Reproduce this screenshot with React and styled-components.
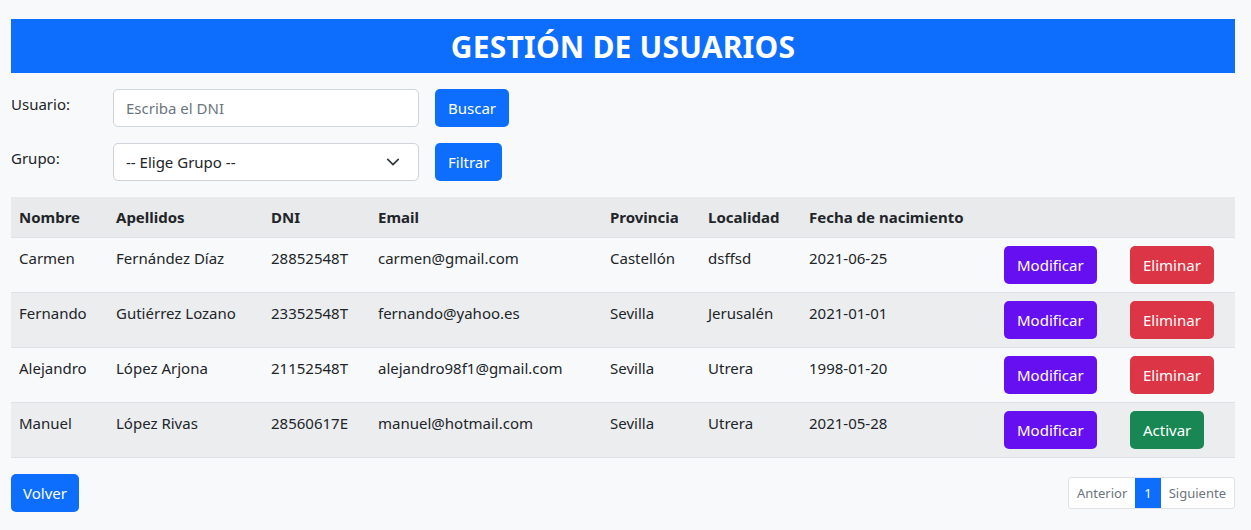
import React from "react";
import styled, { createGlobalStyle } from "styled-components";

const GlobalStyle = createGlobalStyle`
  body {
    margin: 0;
    background: #f8f9fa;
    font-family: "Noto Sans", "Open Sans", sans-serif;
    color: #212529;
    font-size: 16px;
  }
`;

const Page = styled.div`
  padding: 19px 16px 0 11px;
`;

const Header = styled.h1`
  margin: 0;
  height: 54px;
  background: #0d6efd;
  color: #fff;
  font-size: 30px;
  font-weight: 700;
  display: flex;
  align-items: center;
  justify-content: center;
  letter-spacing: 0.2px;
`;

const FormRow = styled.div`
  display: flex;
  align-items: flex-start;
  margin-top: ${(p) => p.$top}px;
`;

const Label = styled.label`
  width: 102px;
  font-size: 15px;
  padding-top: 5px;
  line-height: 20px;
`;

const Input = styled.input`
  box-sizing: border-box;
  width: 306px;
  height: 38px;
  border: 1px solid #ced4da;
  border-radius: 5px;
  background: #fff;
  padding: 0 12px;
  font: inherit;
  font-size: 15px;
  &::placeholder {
    color: #6c757d;
  }
`;

const SelectBox = styled.div`
  box-sizing: border-box;
  width: 306px;
  height: 38px;
  border: 1px solid #ced4da;
  border-radius: 5px;
  background: #fff;
  padding: 0 18px 0 12px;
  display: flex;
  align-items: center;
  justify-content: space-between;
  font-size: 15px;
`;

const Button = styled.button`
  box-sizing: border-box;
  height: 38px;
  border: none;
  border-radius: 5px;
  background: ${(p) => p.$bg || "#0d6efd"};
  color: #fff;
  font: inherit;
  font-size: 15px;
  padding: 0 ${(p) => p.$pad || 13}px;
  margin-left: ${(p) => p.$ml || 0}px;
  cursor: pointer;
`;

const Table = styled.table`
  width: 100%;
  margin-top: 16px;
  border-collapse: collapse;
  table-layout: fixed;
  font-size: 15px;
`;

const Th = styled.th`
  text-align: left;
  font-weight: 700;
  background: #e9eaec;
  height: 40px;
  padding: 0 8px;
  border-bottom: 1px solid #dee2e6;
  box-sizing: border-box;
  white-space: nowrap;
`;

const Tr = styled.tr`
  background: ${(p) => (p.$striped ? "#ecedef" : "#f8f9fa")};
`;

const Td = styled.td`
  padding: ${(p) => (p.$action ? 8 : 8)}px 8px 0;
  height: 55px;
  box-sizing: border-box;
  vertical-align: top;
  border-bottom: 1px solid #dee2e6;
  line-height: 24px;
  white-space: nowrap;
`;

const Footer = styled.div`
  display: flex;
  justify-content: space-between;
  align-items: center;
  margin-top: 16px;
`;

const Pagination = styled.div`
  display: flex;
  height: 30px;
  border: 1px solid #dee2e6;
  border-radius: 3px;
  background: #fff;
  font-size: 13px;
  overflow: hidden;
`;

const PageItem = styled.span`
  display: flex;
  align-items: center;
  padding: 0 ${(p) => (p.$active ? 9 : 8)}px;
  color: ${(p) => (p.$active ? "#fff" : "#6c757d")};
  background: ${(p) => (p.$active ? "#0d6efd" : "transparent")};
`;

const users = [
  ["Carmen", "Fernández Díaz", "28852548T", "carmen@gmail.com", "Castellón", "dsffsd", "2021-06-25", true],
  ["Fernando", "Gutiérrez Lozano", "23352548T", "fernando@yahoo.es", "Sevilla", "Jerusalén", "2021-01-01", true],
  ["Alejandro", "López Arjona", "21152548T", "alejandro98f1@gmail.com", "Sevilla", "Utrera", "1998-01-20", true],
  ["Manuel", "López Rivas", "28560617E", "manuel@hotmail.com", "Sevilla", "Utrera", "2021-05-28", false],
];

const widths = [97, 155, 107, 232, 98, 101, 195, 126, 113];

const Chevron = () => (
  <svg width="14" height="14" viewBox="0 0 16 16" fill="none" stroke="#343a40" strokeWidth="2" strokeLinecap="round" strokeLinejoin="round">
    <path d="M2 5l6 6 6-6" />
  </svg>
);

export default function App() {
  return (
    <Page>
      <GlobalStyle />
      <Header>GESTIÓN DE USUARIOS</Header>
      <FormRow $top={16}>
        <Label>Usuario:</Label>
        <Input placeholder="Escriba el DNI" />
        <Button $ml={16}>Buscar</Button>
      </FormRow>
      <FormRow $top={16}>
        <Label>Grupo:</Label>
        <SelectBox>
          <span>-- Elige Grupo --</span>
          <Chevron />
        </SelectBox>
        <Button $ml={16}>Filtrar</Button>
      </FormRow>
      <Table>
        <colgroup>
          {widths.map((w, i) => (
            <col key={i} style={{ width: w }} />
          ))}
        </colgroup>
        <thead>
          <tr>
            <Th>Nombre</Th>
            <Th>Apellidos</Th>
            <Th>DNI</Th>
            <Th>Email</Th>
            <Th>Provincia</Th>
            <Th>Localidad</Th>
            <Th>Fecha de nacimiento</Th>
            <Th />
            <Th />
          </tr>
        </thead>
        <tbody>
          {users.map((u, i) => (
            <Tr key={u[2]} $striped={i % 2 === 1}>
              {u.slice(0, 7).map((c, j) => (
                <Td key={j}>{c}</Td>
              ))}
              <Td $action>
                <Button $bg="#6610f2">Modificar</Button>
              </Td>
              <Td $action>
                {u[7] ? (
                  <Button $bg="#dc3545">Eliminar</Button>
                ) : (
                  <Button $bg="#198754">Activar</Button>
                )}
              </Td>
            </Tr>
          ))}
        </tbody>
      </Table>
      <Footer>
        <Button $pad={12}>Volver</Button>
        <Pagination>
          <PageItem>Anterior</PageItem>
          <PageItem $active>1</PageItem>
          <PageItem>Siguiente</PageItem>
        </Pagination>
      </Footer>
    </Page>
  );
}
